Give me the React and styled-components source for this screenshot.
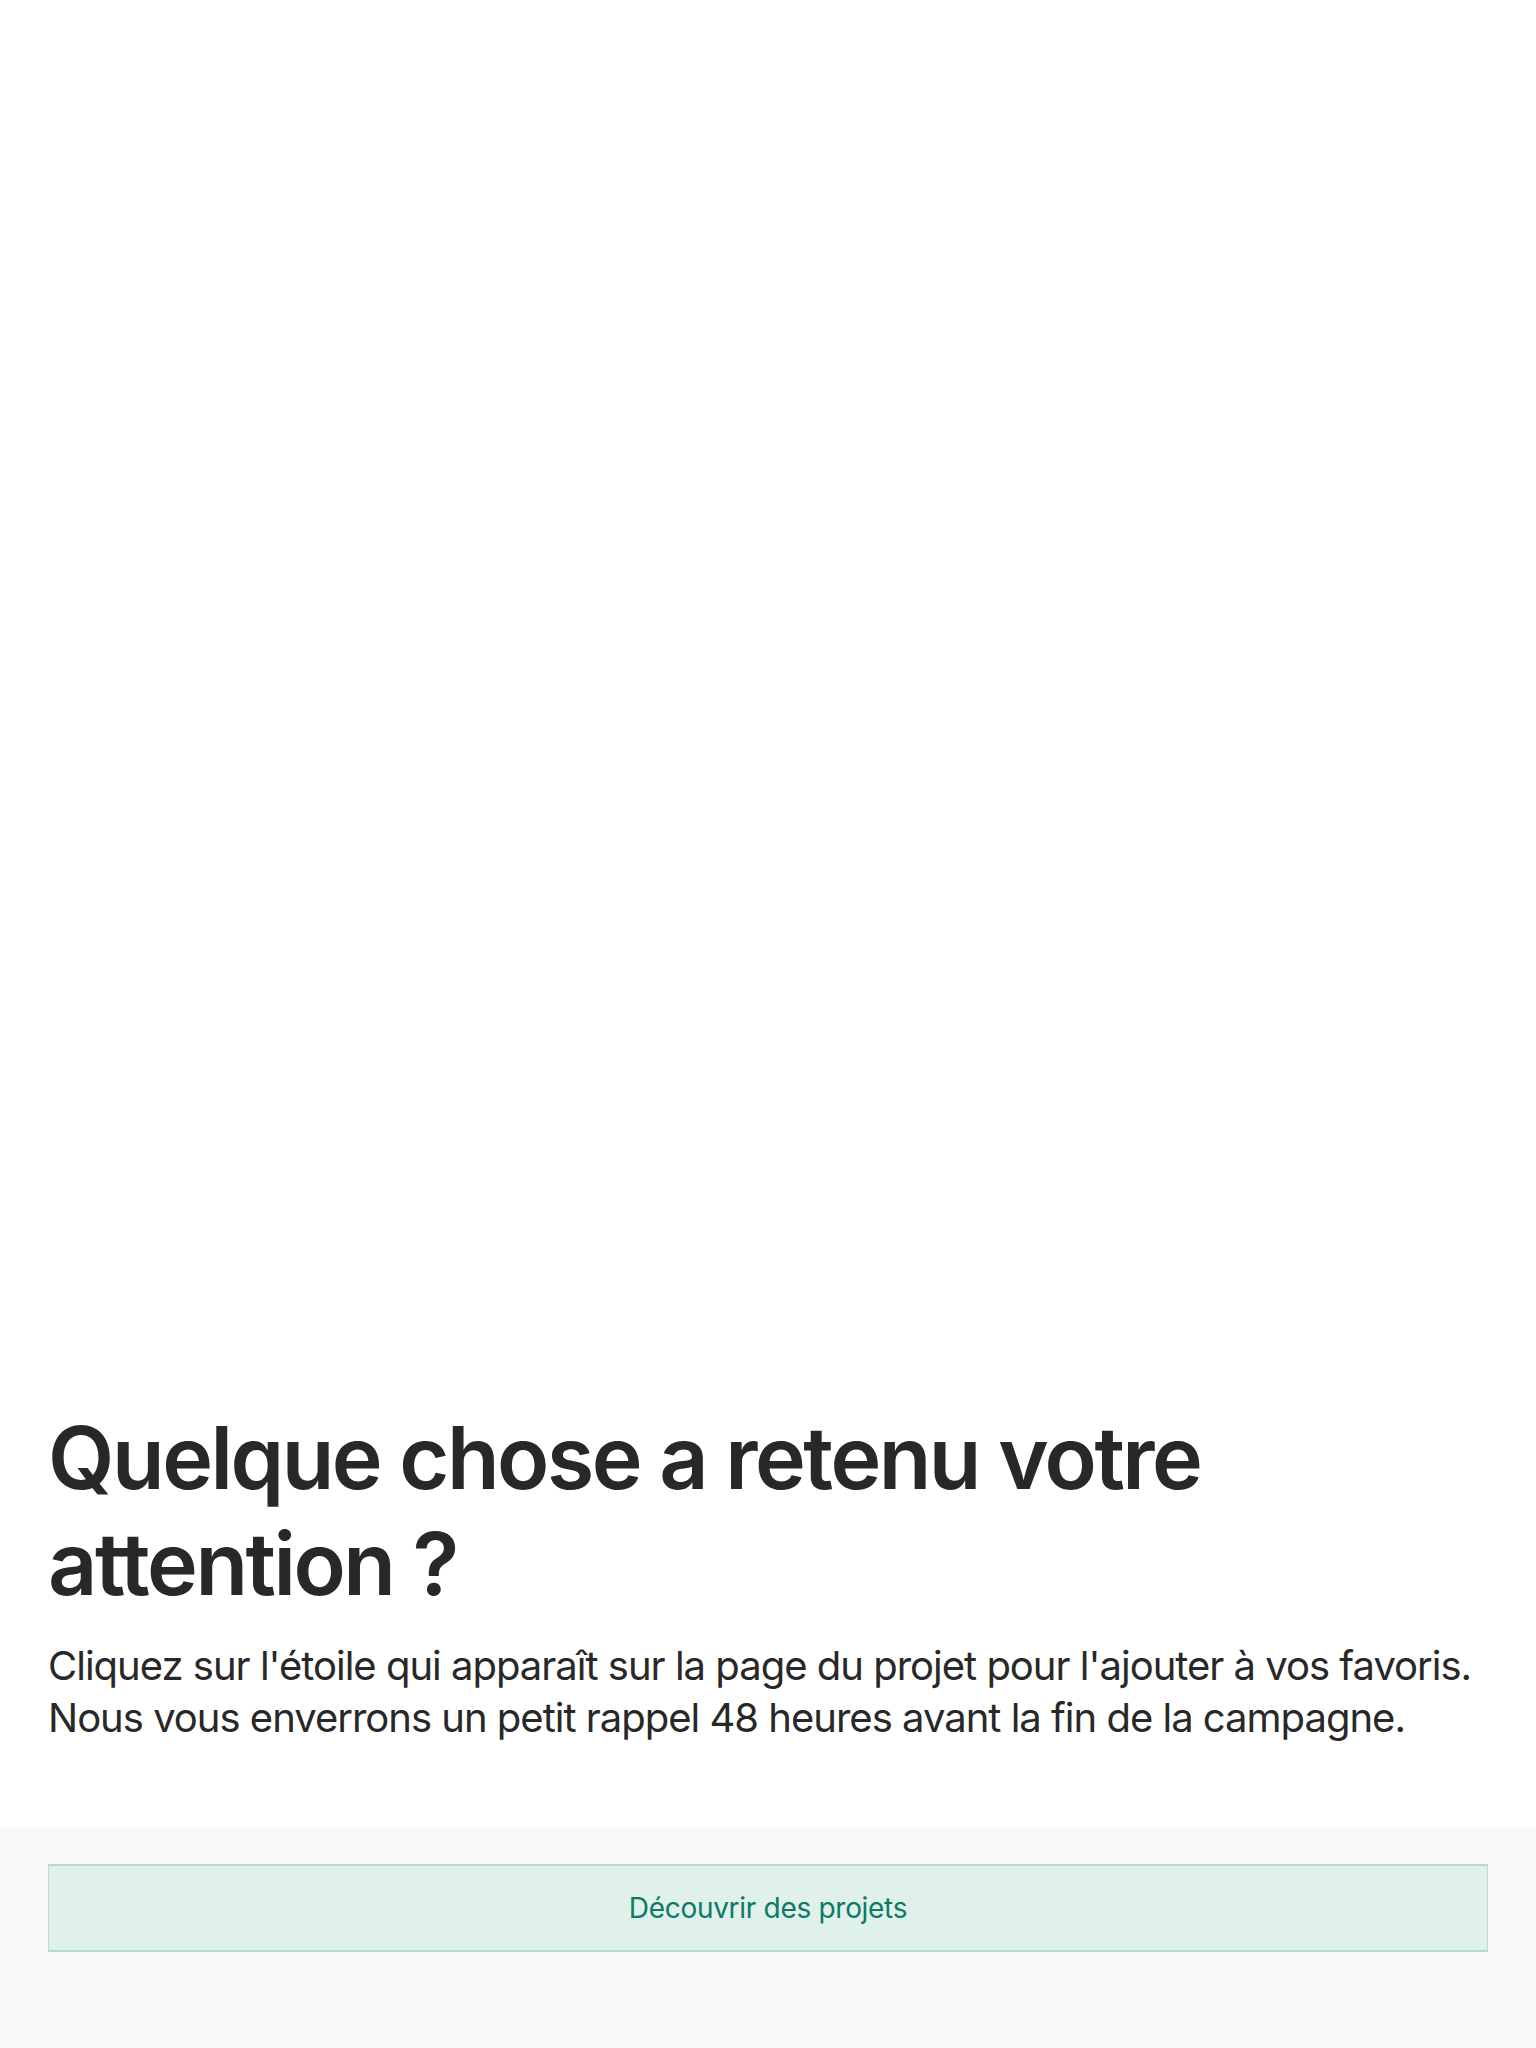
import React from 'react';
import styled, { createGlobalStyle } from 'styled-components';

const GlobalStyle = createGlobalStyle`
    html, body {
        margin: 0;
        padding: 0;
        background: #ffffff;
    }
    body {
        font-family: 'Inter', 'Noto Sans', sans-serif;
        -webkit-font-smoothing: antialiased;
    }
`;

/** Whole screen, white top with grey footer */
const Page = styled.div`
    min-height: 100vh;
    display: flex;
    flex-direction: column;
`;

/** Empty state message, pushed to the bottom of the white area */
const Hero = styled.section`
    flex: 1;
    display: flex;
    flex-direction: column;
    justify-content: flex-end;
    padding: 0 48px 84px;
`;

const Title = styled.h1`
    margin: 0;
    font-size: 86px;
    line-height: 106px;
    font-weight: 600;
    letter-spacing: -2.5px;
    color: #282828;
`;

const Paragraph = styled.p`
    margin: 23px 0 0;
    font-size: 40px;
    line-height: 52px;
    font-weight: 400;
    letter-spacing: -1px;
    color: #282828;
`;

const Footer = styled.footer`
    background: #f9f9f8;
    padding: 36px 48px 96px;
`;

/** Light green call to action */
const Button = styled.a`
    display: flex;
    align-items: center;
    justify-content: center;
    box-sizing: border-box;
    height: 88px;
    background: #e0f1ec;
    border: 2px solid #b6d9cf;
    border-left-width: 1px;
    border-right-width: 1px;
    color: #0b7a62;
    font-size: 28px;
    font-weight: 400;
    letter-spacing: -0.3px;
    text-decoration: none;
    cursor: pointer;
`;

export default function App() {
    return (
        <>
            <GlobalStyle />
            <Page>
                <Hero>
                    <Title>
                        Quelque chose a retenu votre
                        <br />
                        attention ?
                    </Title>
                    <Paragraph>
                        Cliquez sur l'étoile qui apparaît sur la page du projet pour l'ajouter à vos favoris.
                        <br />
                        Nous vous enverrons un petit rappel 48 heures avant la fin de la campagne.
                    </Paragraph>
                </Hero>
                <Footer>
                    <Button>Découvrir des projets</Button>
                </Footer>
            </Page>
        </>
    );
}
